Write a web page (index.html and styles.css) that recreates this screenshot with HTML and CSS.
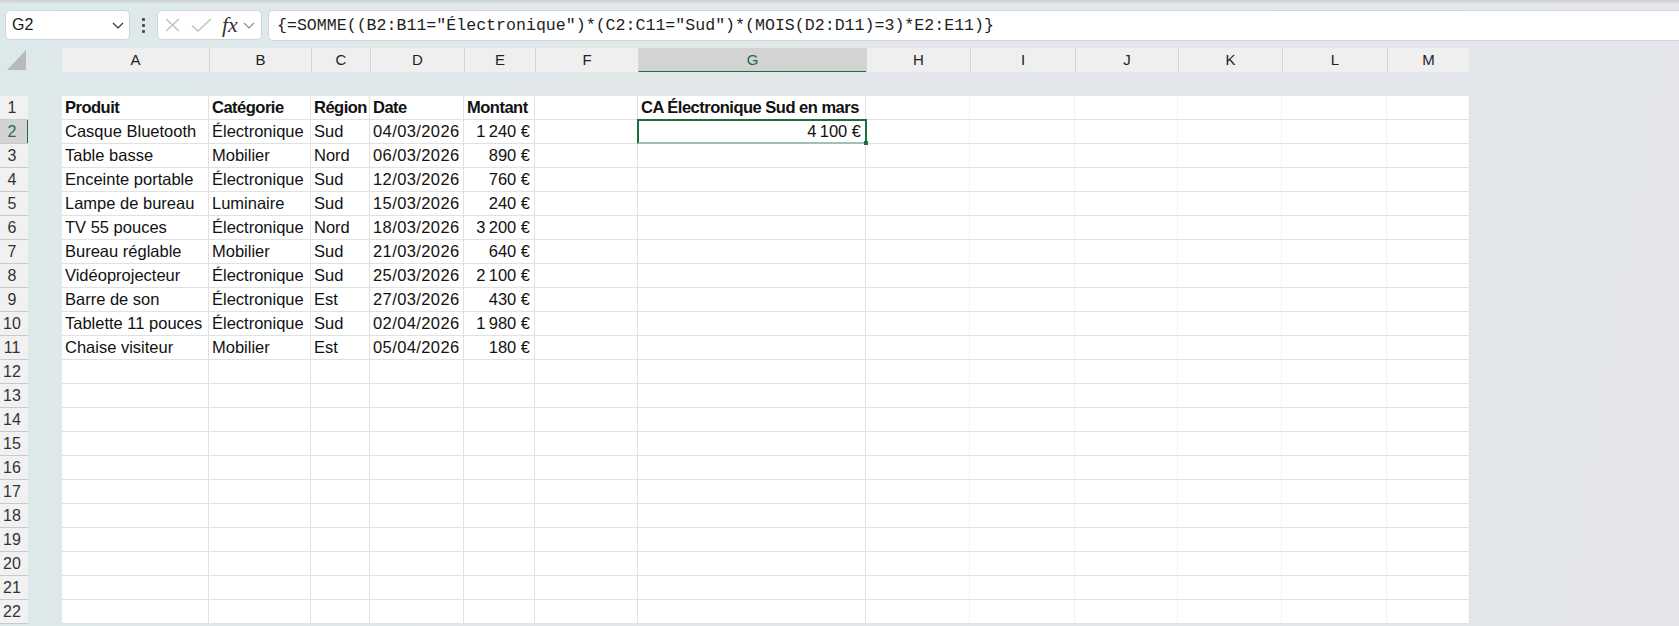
FILE: index.html
```html
<!DOCTYPE html>
<html lang="fr">
<head>
    <meta charset="UTF-8">
    <meta name="viewport" content="width=device-width, initial-scale=1.0">
    <title>Ventes mars</title>
    <link rel="stylesheet" href="styles.css">
</head>
<body>
    <div class="toolbar">
        <div class="namebox">
            <span>G2</span>
            <svg class="chev" width="12" height="7" viewBox="0 0 12 7"><path d="M1 1l5 5 5-5" fill="none" stroke="#333" stroke-width="1.2"/></svg>
        </div>
        <div class="kebab"><i></i><i></i><i></i></div>
        <div class="fxbox">
            <svg class="cancel" width="15" height="14" viewBox="0 0 15 14"><path d="M1 1l13 12M14 1L1 13" stroke="#bdbdbd" stroke-width="1.3"/></svg>
            <svg class="enter" width="21" height="14" viewBox="0 0 21 14"><path d="M1 7.5l6 5.5L20 1" fill="none" stroke="#bdbdbd" stroke-width="1.3"/></svg>
            <span class="fx">fx</span>
            <svg class="chev" width="12" height="7" viewBox="0 0 12 7"><path d="M1 1l5 5 5-5" fill="none" stroke="#8c8c8c" stroke-width="1.1"/></svg>
        </div>
        <div class="formula">{=SOMME((B2:B11="Électronique")*(C2:C11="Sud")*(MOIS(D2:D11)=3)*E2:E11)}</div>
    </div>

    <div class="sheet">
        <div class="grid colhead">
            <div class="corner"><svg width="20" height="20" viewBox="0 0 20 20"><polygon points="19,0 19,20 0,20" fill="#b7b9bb"/></svg></div>
            <div class="ch">A</div>
            <div class="ch">B</div>
            <div class="ch">C</div>
            <div class="ch">D</div>
            <div class="ch">E</div>
            <div class="ch">F</div>
            <div class="ch active">G</div>
            <div class="ch">H</div>
            <div class="ch">I</div>
            <div class="ch">J</div>
            <div class="ch">K</div>
            <div class="ch">L</div>
            <div class="ch">M</div>
        </div>
        <div class="rows" id="rows"></div>
    </div>

    <script>
        function euro(n) {
            return String(n).replace(/\B(?=(\d{3})+(?!\d))/g, '\u202f') + '\u00a0€';
        }

        const data = [
            ['Produit', 'Catégorie', 'Région', 'Date', 'Montant', '', 'CA Électronique Sud en mars'],
            ['Casque Bluetooth', 'Électronique', 'Sud', '04/03/2026', euro(1240), '', euro(4100)],
            ['Table basse', 'Mobilier', 'Nord', '06/03/2026', euro(890)],
            ['Enceinte portable', 'Électronique', 'Sud', '12/03/2026', euro(760)],
            ['Lampe de bureau', 'Luminaire', 'Sud', '15/03/2026', euro(240)],
            ['TV 55 pouces', 'Électronique', 'Nord', '18/03/2026', euro(3200)],
            ['Bureau réglable', 'Mobilier', 'Sud', '21/03/2026', euro(640)],
            ['Vidéoprojecteur', 'Électronique', 'Sud', '25/03/2026', euro(2100)],
            ['Barre de son', 'Électronique', 'Est', '27/03/2026', euro(430)],
            ['Tablette 11 pouces', 'Électronique', 'Sud', '02/04/2026', euro(1980)],
            ['Chaise visiteur', 'Mobilier', 'Est', '05/04/2026', euro(180)]
        ];

        const rowsEl = document.getElementById('rows');

        for (let r = 1; r <= 22; r++) {
            const row = document.createElement('div');
            row.className = 'grid';

            const rh = document.createElement('div');
            rh.className = r === 2 ? 'rh sel' : 'rh';
            rh.textContent = r;
            row.appendChild(rh);
            row.appendChild(document.createElement('div'));

            const values = data[r - 1] || [];
            for (let c = 0; c < 13; c++) {
                const cell = document.createElement('div');
                cell.className = 'c';
                if (r === 1) cell.classList.add('bold');
                if (r > 1 && (c === 3 || c === 4 || c === 6)) cell.classList.add('right');
                if (r > 1 && c === 3) cell.classList.add('date');
                if (c >= 7) cell.classList.add('far');
                if (r === 2 && c === 6) cell.classList.add('sel');
                cell.textContent = values[c] || '';
                row.appendChild(cell);
            }
            rowsEl.appendChild(row);
        }
    </script>
</body>
</html>
```

FILE: styles.css
```css
* {
    box-sizing: border-box;
}

body {
    margin: 0;
    height: 626px;
    overflow: hidden;
    font-family: "Liberation Sans", Arial, sans-serif;
    color: #111;
    background:
        linear-gradient(#cbcdd1, rgba(227, 229, 234, 0) 4px),
        linear-gradient(100deg, #dce9ea 0%, #e2e7ea 35%, #e3e5ea 100%);
}

/* name box + formula bar */
.toolbar {
    display: flex;
    align-items: flex-start;
    height: 48px;
    padding: 10px 0 0 5px;
}

.namebox {
    width: 125px;
    height: 30px;
    display: flex;
    align-items: center;
    justify-content: space-between;
    padding: 0 5px 0 6px;
    background: #fff;
    border: 1px solid #d3d5d8;
    border-radius: 5px;
    font-size: 16px;
    color: #1a1a1a;
}

.kebab {
    width: 27px;
    height: 30px;
    display: flex;
    flex-direction: column;
    align-items: center;
    justify-content: center;
    gap: 3px;
}

.kebab i {
    width: 3px;
    height: 3px;
    border-radius: 1px;
    background: #4a4a4a;
}

.fxbox {
    width: 105px;
    height: 30px;
    display: flex;
    align-items: center;
    padding-left: 7px;
    background: #fff;
    border: 1px solid #d3d5d8;
    border-radius: 5px;
}

.fxbox .enter {
    margin-left: 11px;
}

.fx {
    margin-left: 10px;
    margin-right: 5px;
    font-family: "Liberation Serif", serif;
    font-style: italic;
    font-size: 22px;
    line-height: 28px;
    color: #333;
}

.formula {
    flex: 1;
    height: 31px;
    margin: 0 -8px 0 6px;
    padding-left: 8px;
    background: #fff;
    border: 1px solid #d3d5d8;
    border-radius: 5px;
    font-family: "Liberation Mono", monospace;
    font-size: 16.6px;
    line-height: 29px;
    color: #1e1e1e;
    white-space: nowrap;
}

/* sheet grid */
.grid {
    display: grid;
    grid-template-columns: 28px 34px 147px 102px 59px 94px 71px 103px 228px 104px 105px 103px 104px 105px 82px;
    grid-auto-rows: 24px;
}

.corner {
    grid-column: span 2;
    display: flex;
    align-items: center;
    padding-left: 7px;
}

.ch {
    background: #efefef;
    border-left: 1px solid #d4d4d4;
    text-align: center;
    font-size: 15px;
    line-height: 24px;
    color: #222;
}

.ch:nth-child(2) {
    border-left: none;
}

.ch.active {
    background: #d3d3d3;
    color: #1d6b40;
    border-bottom: 1px solid #1d6b40;
}

.rows {
    margin-top: 24px;
}

.rh {
    background: #f1f1f1;
    border-bottom: 1px solid #c9c9c9;
    padding-right: 4px;
    text-align: center;
    font-size: 16px;
    line-height: 23px;
    color: #333;
}

.rh.sel {
    background: #d3d3d3;
    color: #2b6a47;
    box-shadow: inset -1px 0 0 #1d6b40;
}

.c {
    background: #fff;
    border-right: 1px solid #e1e1e1;
    border-bottom: 1px solid #e1e1e1;
    padding: 0 4px 0 3px;
    font-size: 16.5px;
    line-height: 23px;
    white-space: nowrap;
}

.c.far {
    border-right-color: #f3f3f3;
}

.c.bold {
    font-weight: bold;
    letter-spacing: -0.5px;
}

.c.right {
    text-align: right;
}

.c.date {
    letter-spacing: 0.4px;
}

/* active cell frame with fill handle */
.c.sel {
    position: relative;
}

.c.sel::after {
    content: "";
    position: absolute;
    left: -1px;
    top: -1px;
    right: -2px;
    bottom: -1px;
    border: 2px solid #1d6f42;
    border-bottom-color: #9dc4ac;
}

.c.sel::before {
    content: "";
    position: absolute;
    right: -3px;
    bottom: -2px;
    width: 4px;
    height: 4px;
    background: #1d6f42;
    z-index: 1;
}
```
